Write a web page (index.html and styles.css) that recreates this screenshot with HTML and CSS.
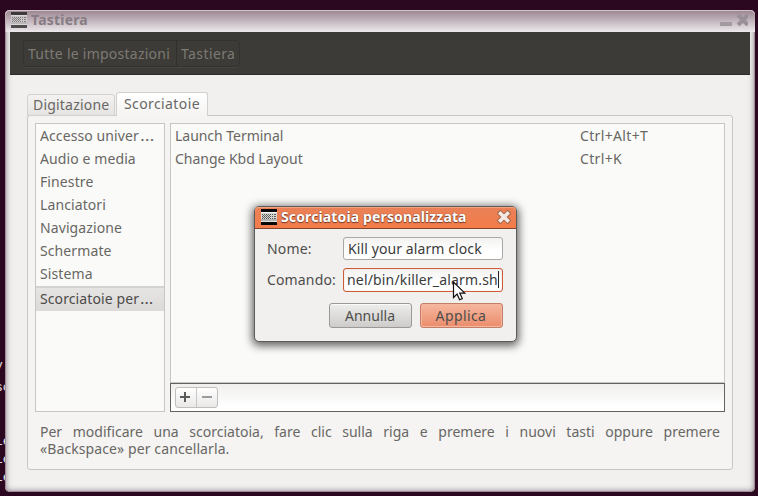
FILE: index.html
```html
<!DOCTYPE html>
<html lang="it">
<head>
<meta charset="utf-8">
<title>Tastiera</title>
<link rel="stylesheet" href="styles.css">
</head>
<body>
<div class="terminal"><span class="t1">y</span><span class="t2">sc</span><span class="t3">Le</span><span class="t4">Le</span><span class="t5">Le</span></div>
<main class="window">
  <header class="titlebar">
    <svg class="kbd faded" width="16" height="16" viewBox="0 0 16 16"><use href="#keyboard"/></svg>
    <span class="window-name">Tastiera</span>
    <svg class="controls" width="28" height="12" viewBox="0 0 28 12"><path d="M0 8h12v4H0z" fill="#a19aa0"/><path d="M19.5 2.5l7 7M26.5 2.5l-7 7" stroke="#989096" stroke-width="4" stroke-linecap="square"/></svg>
  </header>
  <nav class="toolbar"><div class="crumbs"><span class="crumb all">Tutte le impostazioni</span><span class="crumb current">Tastiera</span></div></nav>
  <section class="content">
    <div class="tabs"><span class="tab">Digitazione</span><span class="tab active">Scorciatoie</span></div>
    <div class="panel">
      <div class="lists">
        <ul class="categories">
          <li>Accesso univer<span class="dots">…</span></li><li>Audio e media</li><li>Finestre</li><li>Lanciatori</li><li>Navigazione</li><li>Schermate</li><li>Sistema</li><li class="selected">Scorciatoie per<span class="dots">…</span></li>
        </ul>
        <div class="shortcuts">
          <div class="rows">
            <div class="row"><span class="launch">Launch Terminal</span><span class="keys">Ctrl+Alt+T</span></div>
            <div class="row"><span class="change">Change Kbd Layout</span><span class="keys">Ctrl+K</span></div>
          </div>
          <div class="list-tools"><div class="add-remove">
            <svg width="41" height="19" viewBox="0 0 41 19"><path d="M20.5 0v19" stroke="#c9c7c5"/><path d="M4 9h10M9 4v10" stroke="#5b5b59" stroke-width="2"/><path d="M26 9h10" stroke="#9d9c9a" stroke-width="2"/></svg>
          </div></div>
        </div>
      </div>
      <p class="hint"><span class="hint-first">Per modificare una scorciatoia, fare clic sulla riga e premere i nuovi tasti oppure premere</span><span class="hint-last">«Backspace» per cancellarla.</span></p>
    </div>
  </section>
</main>
<section class="dialog">
  <header class="dialog-title">
    <svg class="kbd" width="16" height="16" viewBox="0 0 16 16">
      <defs><g id="keyboard"><path fill="#080808" d="M0 0h16v16H0z"/><path fill="#d6d6d3" d="M0 3h16v10H0z"/><path fill="#f6f6f4" d="M0 3h16v1H0z"/><path fill="#b4b4b1" d="M0 10h16v2H0z"/><path fill="#e2e2df" d="M0 12h16v1H0z"/><path d="M1 5.5h9M1 7.5h9M1 9.5h9M11 5.5h1M11 7.5h1M11 9.5h1M13 5.5h2M13 7.5h2M13 9.5h2" stroke="#555" stroke-dasharray="1 1"/><path d="M2 6.5h8M2 8.5h8M14.5 5v5" stroke="#666" stroke-dasharray="1 1"/></g></defs>
      <use href="#keyboard"/>
    </svg>
    <span class="dialog-name">Scorciatoia personalizzata</span>
    <svg class="close" width="14" height="14" viewBox="0 0 14 14"><path d="M3.4 3.4l7.2 7.2M10.6 3.4l-7.2 7.2" stroke="#a8654c" stroke-width="5.6" stroke-linecap="square"/><path d="M3.5 3.5l7 7M10.5 3.5l-7 7" stroke="#f3e9e3" stroke-width="3.6" stroke-linecap="square"/></svg>
  </header>
  <div class="form">
    <span class="label name">Nome:</span><div class="field"><span class="value">Kill your alarm clock</span></div>
    <span class="label command">Comando:</span><div class="field focused"><span class="path">nel/bin/killer_alarm.sh</span></div>
  </div>
  <div class="buttons"><button class="cancel">Annulla</button><button class="apply">Applica</button></div>
</section>
<svg class="pointer" width="14" height="20" viewBox="0 0 14 20"><path d="M1.5 1v15.5l3.6-3.4 2.5 5.7 2.7-1.2-2.5-5.5h5z" fill="#fff" stroke="#111" stroke-width="1.2"/></svg>
</body>
</html>
```
FILE: styles.css
```css
* { box-sizing: border-box; }
body { margin: 0; width: 758px; height: 496px; overflow: hidden; padding: 10px 3px 4px 5px; background: #2c0820; font: 14px/23px "Noto Sans", sans-serif; color: #686764; position: relative; }
span, li, button { white-space: nowrap; }
.terminal { position: absolute; inset: 0; color: #e8e3e6; font: 13px/18px "Liberation Mono", monospace; }
.terminal span { position: absolute; left: -5px; }
.terminal .t1 { top: 357px; }
.terminal .t2 { top: 379px; }
.terminal .t3 { top: 433px; }
.terminal .t4 { top: 451px; }
.terminal .t5 { top: 469px; }
.window { position: relative; height: 482px; width: 750px; border-radius: 5px; padding: 0 5px 5px; background: #f1f0ee; box-shadow: inset 0 0 0 1px #9b8c96, inset 0 0 5px 2px #a99ba5; }
.titlebar { height: 22px; margin: 0 -5px; padding: 0 7px 0 6px; display: flex; align-items: center; border-radius: 5px 5px 0 0; background: linear-gradient(#99838f, #ede9ec); box-shadow: inset 0 1px #cfc5cb, inset 1px 0 #bbaeb7; }
.kbd { flex: none; margin-right: 4px; }
.faded { opacity: .65; margin-top: -2px; }
.window-name { font-weight: 700; color: #877b83; margin-top: -3px; letter-spacing: .2px; }
.controls { margin: -2px 0 0 auto; }
.toolbar { height: 43px; background: #3c3b37; border-bottom: 1px solid #2d2c29; padding: 8px 13px; }
.crumbs { display: flex; width: 217px; height: 27px; border: 1px solid #343330; border-radius: 3px; color: #7c7a73; line-height: 26px; box-shadow: 0 1px #45443f; }
.crumb { padding-left: 4px; letter-spacing: .25px; }
.current { letter-spacing: .4px; }
.all { width: 153px; border-right: 1px solid #31302d; }
.content { padding: 17px 17px 0; }
.tabs { display: flex; align-items: flex-end; height: 24px; margin-bottom: -1px; gap: 1px; position: relative; }
.tab { width: 88px; height: 22px; padding-left: 5px; line-height: 20px; border: 1px solid #d3d1cf; border-radius: 3px 3px 0 0; background: linear-gradient(#f3f2f1, #e6e4e2); letter-spacing: .2px; }
.active { width: 92px; height: 24px; padding-left: 7px; background: linear-gradient(#fff, #f5f4f3); border-bottom: 0; line-height: 22px; letter-spacing: .4px; }
.panel { height: 355px; width: 706px; border: 1px solid #c8c6c3; border-radius: 3px; background: #f5f4f2; padding: 7px; }
.lists { display: flex; gap: 5px; height: 289px; }
.categories { width: 130px; margin: 0; padding: 0; border: 1px solid #c8c6c2; background: #fafaf8; list-style: none; }
.categories li { height: 23px; padding-left: 4px; letter-spacing: .1px; }
.dots { display: inline-block; transform: scaleX(1.3); transform-origin: 0 50%; margin-left: 1px; }
.categories .selected { height: 25px; margin-top: 1px; border-top: 2px solid #d5d3d1; background: linear-gradient(#e6e5e4, #dcdad9); color: #4c4b49; line-height: 22px; }
.categories .selected .dots { transform: scaleX(1.2); }
.shortcuts { width: 555px; }
.rows { height: 260px; border: 1px solid #c8c6c2; background: #fafaf8; }
.row { display: grid; grid-template-columns: 405px auto; height: 23px; padding-left: 4px; }
.launch, .change { letter-spacing: -.03px; }
.keys { letter-spacing: .35px; }
.list-tools { height: 29px; border: 1px solid #62625f; background: linear-gradient(#f0efed, #fff 85%); padding: 3px 4px; }
.add-remove { width: 43px; height: 21px; border: 1px solid #c1bfbd; border-radius: 3px; background: linear-gradient(#fff, #e9e8e7); display: flex; }
.hint { margin: 11px 0 0; padding: 0 5px; line-height: 17px; color: #686764; }
.hint span { display: block; }
.hint-first { text-align-last: justify; }
.hint-last { letter-spacing: .1px; }
.dialog { position: absolute; left: 254px; top: 206px; width: 263px; height: 136px; border: 1px solid #5e5a58; border-radius: 5px; background: #f1f0ee; box-shadow: 0 2px 8px 2px rgba(0,0,0,.6); color: #4e4d4b; }
.dialog-title { height: 22px; display: flex; align-items: center; padding: 0 5px 1px 6px; border-bottom: 1px solid #824630; border-radius: 4px 4px 0 0; background: linear-gradient(#e98158, #f47c49); box-shadow: inset 0 1px #f4a27f; }
.dialog-name { color: #fff; font-weight: 700; text-shadow: 0 0 1px #733928, 0 1px 1px #733928; letter-spacing: .13px; margin-top: -1px; }
.close { margin-left: auto; }
.form { display: grid; grid-template-columns: 76px 160px; grid-template-rows: 23px 24px; row-gap: 8px; padding: 8px 0 0 12px; }
.label { letter-spacing: .15px; }
.field { background: linear-gradient(#f3f2f1, #fff 60%); border: 1px solid #aaa8a5; border-radius: 3px; padding-left: 4px; overflow: hidden; line-height: 21px; color: #3b3b3a; display: flex; }
.value { letter-spacing: .1px; }
.focused { border-color: #cc5d38; box-shadow: inset 0 0 1px #e59a7c; padding-left: 3px; }
.path { border-right: 1px solid #222; height: 17px; margin-top: 2px; line-height: 17px; letter-spacing: .17px; }
.buttons { display: flex; gap: 8px; padding: 11px 0 0 74px; }
button { width: 83px; height: 25px; padding: 0 1px 0 0; border: 1px solid #9b9997; border-radius: 3px; background: linear-gradient(#ededec, #cdccca); font: inherit; line-height: 22px; color: #4e4d4b; box-shadow: inset 0 1px #fafafa; }
.apply { letter-spacing: .4px; border-color: #c27e66; background: linear-gradient(#f5b89f, #eb8c6b); box-shadow: inset 0 0 0 1px #f6b69d; }
.pointer { position: absolute; left: 452px; top: 281px; }
```
